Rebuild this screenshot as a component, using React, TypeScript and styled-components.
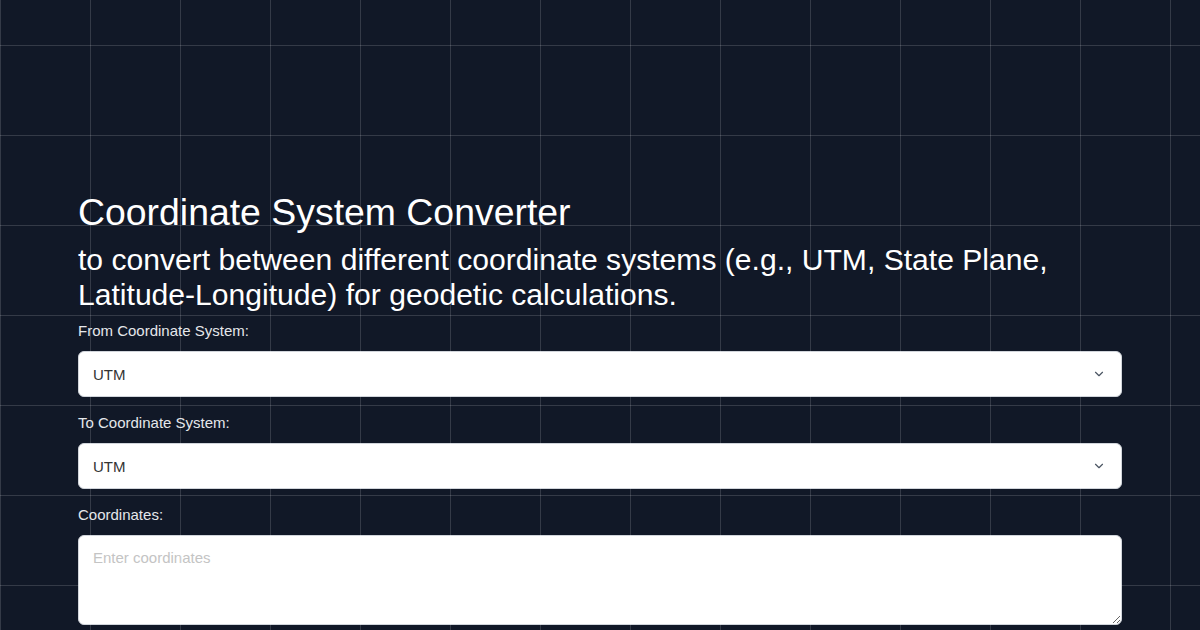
import React from 'react';
import styled, { createGlobalStyle } from 'styled-components';

const GlobalStyle = createGlobalStyle`
  html, body {
    margin: 0;
    padding: 0;
    background: #111827;
  }
  body {
    font-family: "Liberation Sans", Arial, sans-serif;
    color: #f9fafb;
  }
  * {
    box-sizing: border-box;
  }
`;

const Page = styled.div`
  min-height: 630px;
  position: relative;
  overflow: hidden;
`;

const Grid = styled.div`
  position: absolute;
  inset: 0;
  pointer-events: none;
  background-image:
    linear-gradient(to right, rgba(255, 255, 255, 0.15) 1px, transparent 1px),
    linear-gradient(to bottom, rgba(255, 255, 255, 0.15) 1px, transparent 1px);
  background-size: 90px 90px;
  background-position: 0 45px;
`;

const Container = styled.main`
  padding: 190px 78px 0;
  display: flex;
  flex-direction: column;
`;

const Title = styled.h1`
  margin: 0;
  font-size: 37.4px;
  font-weight: 400;
  line-height: 44px;
  color: #ffffff;
`;

const Subtitle = styled.h2`
  margin: 8px 0 9px;
  font-size: 30.1px;
  font-weight: 400;
  line-height: 35px;
  color: #ffffff;
`;

const Field = styled.div`
  display: flex;
  flex-direction: column;
  margin-bottom: 16px;
`;

const Label = styled.label`
  font-size: 15px;
  line-height: 20px;
  color: #e5e7eb;
  margin-bottom: 10px;
`;

const SelectWrap = styled.div`
  position: relative;
`;

const Select = styled.select`
  appearance: none;
  width: 100%;
  height: 46px;
  padding: 0 40px 0 14px;
  font-family: inherit;
  font-size: 15px;
  color: #333333;
  background: #ffffff;
  border: 1px solid #d1d5db;
  border-radius: 6px;
  outline: none;
`;

const Chevron = styled.svg`
  position: absolute;
  right: 16px;
  top: 50%;
  width: 14px;
  height: 14px;
  transform: translateY(-50%);
  pointer-events: none;
`;

const TextArea = styled.textarea`
  width: 100%;
  height: 90px;
  padding: 13px 14px;
  font-family: inherit;
  font-size: 15px;
  color: #333333;
  background: #ffffff;
  border: 1px solid #d1d5db;
  border-radius: 6px;
  outline: none;
  resize: vertical;

  &::placeholder {
    color: #c4c4c4;
  }
`;

const systems = ['UTM', 'State Plane', 'Latitude-Longitude'];

const SystemSelect = ({ id }: { id: string }) => (
  <SelectWrap>
    <Select id={id} defaultValue="UTM">
      {systems.map((s) => (
        <option key={s}>{s}</option>
      ))}
    </Select>
    <Chevron viewBox="0 0 24 24" fill="none" stroke="#4b5563" strokeWidth="2" strokeLinecap="round" strokeLinejoin="round">
      <path d="m6 9 6 6 6-6" />
    </Chevron>
  </SelectWrap>
);

export default function App() {
  return (
    <Page>
      <GlobalStyle />
      <Container>
        <Title>Coordinate System Converter</Title>
        <Subtitle>
          to convert between different coordinate systems (e.g., UTM, State Plane, Latitude-Longitude) for geodetic
          calculations.
        </Subtitle>
        <Field>
          <Label htmlFor="from">From Coordinate System:</Label>
          <SystemSelect id="from" />
        </Field>
        <Field>
          <Label htmlFor="to">To Coordinate System:</Label>
          <SystemSelect id="to" />
        </Field>
        <Field>
          <Label htmlFor="coords">Coordinates:</Label>
          <TextArea id="coords" placeholder="Enter coordinates" />
        </Field>
      </Container>
      <Grid />
    </Page>
  );
}
